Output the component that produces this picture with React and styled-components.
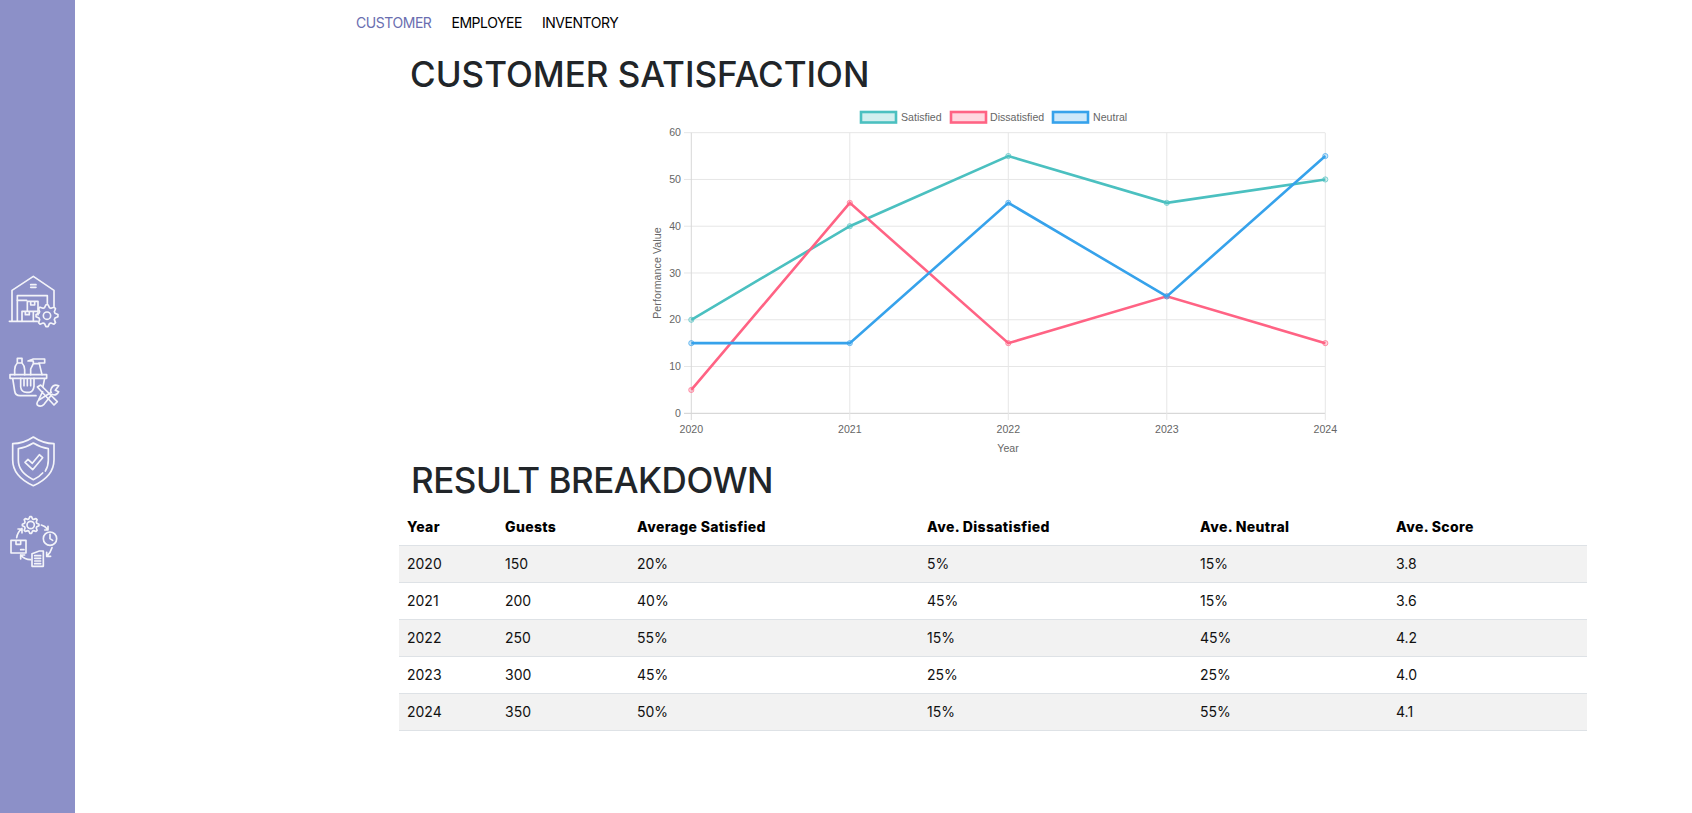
import React from 'react';
import styled, { createGlobalStyle } from 'styled-components';

const GlobalStyle = createGlobalStyle`
  html, body {
    margin: 0;
    padding: 0;
    background: #fff;
    font-family: Inter, 'Noto Sans', sans-serif;
  }
`;

const Page = styled.div`
  display: flex;
  min-height: 100vh;
`;

const Sidebar = styled.aside`
  flex: 0 0 75px;
  display: flex;
  flex-direction: column;
  gap: 20px;
  padding-top: 273px;
  background: #8c90c8;
`;

const IconSvg = styled.svg`
  display: block;
  width: 75px;
  height: 60px;
  fill: none;
  stroke: #fff;
  stroke-width: 5;
  stroke-linecap: round;
  stroke-linejoin: round;
  opacity: 0.9;
`;

const Main = styled.main`
  flex: 1;
  padding-left: 281px;
`;

const Nav = styled.nav`
  display: flex;
  align-items: center;
  gap: 20px;
  height: 44px;
`;

const NavLink = styled.a`
  font-size: 14px;
  letter-spacing: -0.45px;
  color: ${(p) => (p.$active ? '#6a6eb0' : '#000')};
  cursor: pointer;
`;

const Content = styled.div`
  padding-left: 43px;
  width: 1188px;
`;

const Title = styled.h1`
  margin: ${(p) => p.$top}px 0 0 ${(p) => p.$left}px;
  font-size: 35px;
  line-height: 43px;
  font-weight: 500;
  letter-spacing: ${(p) => p.$tracking}px;
  color: #212529;
`;

const ChartSvg = styled.svg`
  display: block;
  width: 700px;
  height: 356px;
  margin: 4px 0 0 241px;
  font-family: 'Liberation Sans', Arial, sans-serif;
  font-size: 10.6px;
`;

const Table = styled.table`
  width: 1188px;
  margin-top: 6px;
  border-collapse: collapse;
  table-layout: fixed;
  font-size: 14px;
  color: #111;
`;

const Th = styled.th`
  height: 21px;
  padding: 8px;
  text-align: left;
  font-weight: 800;
  letter-spacing: 0.35px;
  color: #000;
  border-bottom: 1px solid #dee2e6;
`;

const Td = styled.td`
  height: 20px;
  padding: 7px 8px 9px;
  border-bottom: 1px solid #dee2e6;
`;

const Row = styled.tr`
  background: ${(p) => (p.$striped ? '#f2f2f2' : '#fff')};
`;

const teeth = (cx, cy, outer, inner, count) => {
  const pts = [];
  for (let i = 0; i < count * 4; i++) {
    const r = i % 4 < 2 ? outer : inner;
    const a = ((i - 0.5) / (count * 4)) * Math.PI * 2;
    pts.push(`${(cx + r * Math.cos(a)).toFixed(1)} ${(cy + r * Math.sin(a)).toFixed(1)}`);
  }
  return `M${pts.join('L')}Z`;
};

const WarehouseIcon = () => (
  <IconSvg viewBox="0 40 225 180">
    <path d="M28 185H112M36 185V92L100 50L162 92V140M52 185V108H142V132" />
    <path d="M92 75H108M92 83H108M52 122H80" />
    <path d="M82 155V125H114V155M66 185V155H100V185M100 155H114V166M92 125V136H104V125M76 155V165H88V155" />
    <path d={teeth(141, 168, 33, 25, 8)} />
    <circle cx="141" cy="168" r="11" />
  </IconSvg>
);

const CleaningIcon = () => (
  <IconSvg viewBox="0 280 225 180">
    <path d="M52 296H66V310H52ZM44 345V330Q44 318 52 310M66 310Q74 318 74 330V345" />
    <path d="M84 304L100 298H134V310H116M84 304H100V312H118L126 345M92 345V328L100 312" />
    <path d="M30 345H140V356H30ZM38 356L44 394Q46 408 60 408H108M134 356L129 380" />
    <path d="M62 356V382M62 382Q64 398 80 398H88Q100 396 102 380V356M72 360V378M82 360V378M92 360V378" />
    <path d="M112 382L122 376L172 426L162 436ZM128 396L116 420" />
    <path d="M176 378Q160 372 154 386Q150 394 154 398L118 420Q108 428 112 436Q122 444 132 434L156 404Q170 410 176 396L166 392Z" />
  </IconSvg>
);

const ShieldIcon = () => (
  <IconSvg viewBox="0 40 225 180">
    <path d="M100 52Q70 72 38 72V120Q38 170 100 198Q162 170 162 120V72Q130 72 100 52Z" />
    <path d="M128 160Q118 172 100 180Q55 158 55 122V87Q78 84 100 70Q122 84 145 87V122Q145 140 136 154" />
    <path d="M75 128L84 119L97 131L118 105L128 114L98 150Z" />
  </IconSvg>
);

const ProcessIcon = () => (
  <IconSvg viewBox="0 280 225 180">
    <path d={teeth(92, 316, 25, 19, 8)} />
    <circle cx="92" cy="316" r="11" />
    <circle cx="150" cy="357" r="20" />
    <path d="M150 344V357L158 362" />
    <path d="M33 362H78V400H33ZM48 362V374H62V362M62 390H72" />
    <path d="M96 402L118 394H130V440H96ZM104 408H122M104 416H122M104 424H122M104 432H122" />
    <path d="M124 316Q134 318 144 330M144 320V331H134" />
    <path d="M156 384Q152 398 140 410M140 398V410H152" />
    <path d="M92 420Q74 420 62 406M62 418V406H74" />
    <path d="M50 354Q52 338 66 326M54 328H66V340" />
  </IconSvg>
);

const years = [2020, 2021, 2022, 2023, 2024];
const series = [
  { label: 'Satisfied', color: '#4bc0c0', fill: 'rgba(75,192,192,0.25)', values: [20, 40, 55, 45, 50], box: 220, text: 261 },
  { label: 'Dissatisfied', color: '#ff6384', fill: 'rgba(255,99,132,0.25)', values: [5, 45, 15, 25, 15], box: 310, text: 350 },
  { label: 'Neutral', color: '#36a2eb', fill: 'rgba(54,162,235,0.25)', values: [15, 15, 45, 25, 55], box: 412, text: 453 },
];
const xAt = (i) => 51.3 + i * 158.5;
const yAt = (v) => 313.3 - v * 4.677;

const PerformanceChart = () => (
  <ChartSvg viewBox="0 0 700 356">
    {[0, 10, 20, 30, 40, 50, 60].map((v) => (
      <g key={v}>
        <line x1="44" x2="685" y1={yAt(v)} y2={yAt(v)} stroke={v === 0 ? '#cfcfcf' : '#e6e6e6'} />
        <text x="41" y={yAt(v) + 3.7} textAnchor="end" fill="#666">{v}</text>
      </g>
    ))}
    {years.map((year, i) => (
      <g key={year}>
        <line x1={xAt(i)} x2={xAt(i)} y1="32.7" y2="320" stroke={i === 0 ? '#d8d8d8' : '#e6e6e6'} />
        <text x={xAt(i)} y="333" textAnchor="middle" fill="#666">{year}</text>
      </g>
    ))}
    <text x="368" y="352" textAnchor="middle" fill="#666">Year</text>
    <text transform="translate(20.5 173) rotate(-90)" textAnchor="middle" fill="#666" letterSpacing="0.1">Performance Value</text>
    {series.map((s) => (
      <g key={s.label}>
        <rect x={s.box + 1} y="12" width="35" height="10.5" fill={s.fill} stroke={s.color} strokeWidth="2.6" />
        <text x={s.text} y="20.5" fill="#666">{s.label}</text>
        <polyline
          points={s.values.map((v, i) => `${xAt(i)},${yAt(v)}`).join(' ')}
          fill="none"
          stroke={s.color}
          strokeWidth="2.6"
        />
        {s.values.map((v, i) => (
          <circle key={i} cx={xAt(i)} cy={yAt(v)} r="2.6" fill={s.fill} stroke={s.color} strokeOpacity="0.65" />
        ))}
      </g>
    ))}
  </ChartSvg>
);

const columns = [
  { name: 'Year', width: 98 },
  { name: 'Guests', width: 132 },
  { name: 'Average Satisfied', width: 290 },
  { name: 'Ave. Dissatisfied', width: 273 },
  { name: 'Ave. Neutral', width: 196 },
  { name: 'Ave. Score', width: 199 },
];

const rows = [
  ['2020', '150', '20%', '5%', '15%', '3.8'],
  ['2021', '200', '40%', '45%', '15%', '3.6'],
  ['2022', '250', '55%', '15%', '45%', '4.2'],
  ['2023', '300', '45%', '25%', '25%', '4.0'],
  ['2024', '350', '50%', '15%', '55%', '4.1'],
];

export default function App() {
  return (
    <Page>
      <GlobalStyle />
      <Sidebar>
        <WarehouseIcon />
        <CleaningIcon />
        <ShieldIcon />
        <ProcessIcon />
      </Sidebar>
      <Main>
        <Nav>
          <NavLink $active>CUSTOMER</NavLink>
          <NavLink>EMPLOYEE</NavLink>
          <NavLink>INVENTORY</NavLink>
        </Nav>
        <Content>
          <Title $top={9} $left={11} $tracking={0}>CUSTOMER SATISFACTION</Title>
          <PerformanceChart />
          <Title $top={3} $left={12} $tracking={-0.5}>RESULT BREAKDOWN</Title>
          <Table>
            <colgroup>
              {columns.map((c) => (
                <col key={c.name} width={c.width} />
              ))}
            </colgroup>
            <thead>
              <tr>
                {columns.map((c) => (
                  <Th key={c.name}>{c.name}</Th>
                ))}
              </tr>
            </thead>
            <tbody>
              {rows.map((row, i) => (
                <Row key={row[0]} $striped={i % 2 === 0}>
                  {row.map((cell, j) => (
                    <Td key={j}>{cell}</Td>
                  ))}
                </Row>
              ))}
            </tbody>
          </Table>
        </Content>
      </Main>
    </Page>
  );
}
